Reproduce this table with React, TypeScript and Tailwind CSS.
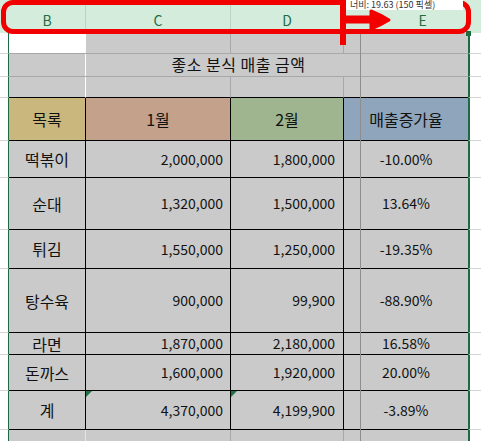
import React from "react";

const FONT = { fontFamily: '"Noto Sans CJK KR", "Noto Sans", sans-serif' };

function SideL({ h }: { h: number }) {
  return (
    <div
      className="shrink-0 w-[9px] bg-white border-r border-[#1e6b41] border-b border-b-[#d4d4d4]"
      style={{ height: h }}
    />
  );
}
function SideR({ h }: { h: number }) {
  return (
    <div
      className="shrink-0 w-[13px] bg-white border-l-2 border-[#1e6b41] border-b border-b-[#d4d4d4]"
      style={{ height: h }}
    />
  );
}

function Row({ h, children }: { h: number; children: React.ReactNode }) {
  return (
    <div className="flex w-[481px]" style={{ height: h }}>
      <SideL h={h} />
      {children}
      <SideR h={h} />
    </div>
  );
}

type DataRow = {
  h: number;
  name: string;
  a: string;
  b: string;
  r: string;
  tri?: boolean;
};

const data: DataRow[] = [
  { h: 37, name: "떡볶이", a: "2,000,000", b: "1,800,000", r: "-10.00%" },
  { h: 52, name: "순대", a: "1,320,000", b: "1,500,000", r: "13.64%" },
  { h: 39, name: "튀김", a: "1,550,000", b: "1,250,000", r: "-19.35%" },
  { h: 64, name: "탕수육", a: "900,000", b: "99,900", r: "-88.90%" },
  { h: 22, name: "라면", a: "1,870,000", b: "2,180,000", r: "16.58%" },
  { h: 36, name: "돈까스", a: "1,600,000", b: "1,920,000", r: "20.00%" },
  { h: 39, name: "계", a: "4,370,000", b: "4,199,900", r: "-3.89%", tri: true },
];

function Tri() {
  return (
    <div className="absolute left-0 top-0 w-0 h-0 border-t-[6px] border-t-[#1e7145] border-r-[6px] border-r-transparent" />
  );
}

export default function App() {
  return (
    <div
      className="relative w-[481px] h-[441px] overflow-hidden bg-white text-[14px] text-[#111]"
      style={FONT}
    >
      {/* column header */}
      <div className="flex w-[481px] h-[33px] bg-[#d3ecdc] text-[14px] text-[#1f6e43]">
        <div className="w-[9px] shrink-0" />
        <div className="w-[77px] shrink-0 flex items-center justify-center border-r border-[#b9d6c4] pt-[6px]">
          <span className="leading-none">B</span>
        </div>
        <div className="w-[145px] shrink-0 flex items-center justify-center border-r border-[#b9d6c4] pt-[6px]">
          <span className="leading-none">C</span>
        </div>
        <div className="w-[113px] shrink-0 flex items-center justify-center border-r border-[#b9d6c4] pt-[6px]">
          <span className="leading-none">D</span>
        </div>
        <div className="flex-1 flex items-center justify-center pl-[20px] pt-[6px]">
          <span className="leading-none">E</span>
        </div>
      </div>

      {/* row 1 */}
      <Row h={21}>
        <div className="w-[77px] shrink-0 bg-white border-b border-[#a8a8a8]" />
        <div className="w-[145px] shrink-0 bg-[#cacaca] border-r border-b border-[#a8a8a8]" />
        <div className="w-[113px] shrink-0 bg-[#cacaca] border-r border-b border-[#a8a8a8]" />
        <div className="w-[124px] shrink-0 bg-[#cacaca] border-b border-[#a8a8a8]" />
      </Row>

      {/* row 2 - title */}
      <Row h={23}>
        <div className="relative w-[459px] shrink-0 bg-[#cacaca] border-b border-[#a8a8a8] flex items-center justify-center">
          <div className="absolute left-[76px] top-0 bottom-0 w-px bg-white" />
          <span className="relative -top-px text-[16px] tracking-[0.5px]">좋소 분식 매출 금액</span>
        </div>
      </Row>

      {/* row 3 */}
      <Row h={21}>
        <div className="w-[77px] shrink-0 bg-[#cacaca] border-r border-r-white border-b border-b-black" />
        <div className="w-[145px] shrink-0 bg-[#cacaca] border-r border-r-[#a8a8a8] border-b border-b-black" />
        <div className="w-[113px] shrink-0 bg-[#cacaca] border-r border-r-[#a8a8a8] border-b border-b-black" />
        <div className="w-[124px] shrink-0 bg-[#cacaca] border-b border-b-black" />
      </Row>

      {/* table header */}
      <Row h={43}>
        <div className="w-[77px] shrink-0 bg-[#cab77d] border-r border-b border-black flex items-center justify-center text-[16px]">
          목록
        </div>
        <div className="w-[145px] shrink-0 bg-[#c4a18b] border-r border-b border-black flex items-center justify-center text-[16px]">
          1월
        </div>
        <div className="w-[113px] shrink-0 bg-[#9eb58f] border-r border-b border-black flex items-center justify-center text-[16px]">
          2월
        </div>
        <div className="w-[124px] shrink-0 bg-[#8fa5bb] border-b border-black flex items-center justify-center text-[16px]">
          매출증가율
        </div>
      </Row>

      {data.map((d) => (
        <Row key={d.name} h={d.h}>
          <div className="w-[77px] shrink-0 bg-[#cacaca] border-r border-b border-black flex items-center justify-center text-[16px]">
            {d.name}
          </div>
          <div className="relative w-[145px] shrink-0 bg-[#cacaca] border-r border-b border-black flex items-center justify-end pr-[7px]">
            {d.tri && <Tri />}
            {d.a}
          </div>
          <div className="relative w-[113px] shrink-0 bg-[#cacaca] border-r border-b border-black flex items-center justify-end pr-[8px]">
            {d.tri && <Tri />}
            {d.b}
          </div>
          <div className="w-[124px] shrink-0 bg-[#cacaca] border-b border-black flex items-center justify-center">
            {d.r}
          </div>
        </Row>
      ))}

      {/* bottom partial row */}
      <Row h={14}>
        <div className="w-[77px] shrink-0 bg-[#cacaca] border-r border-r-[#e4e4e4]" />
        <div className="w-[145px] shrink-0 bg-[#cacaca] border-r border-r-[#a8a8a8]" />
        <div className="w-[113px] shrink-0 bg-[#cacaca] border-r border-r-[#a8a8a8]" />
        <div className="w-[124px] shrink-0 bg-[#cacaca]" />
      </Row>

      {/* column resize guide line */}
      <div className="absolute left-[360px] top-[33px] bottom-0 w-px bg-[#8e8e8e]" />

      {/* selection corner handle */}
      <div className="absolute left-[466px] top-[31px] w-[5px] h-[5px] bg-[#1e6b41]" />

      {/* red annotation ring */}
      <div className="absolute left-[1px] top-0 w-[470px] h-[34px] border-[5px] border-[#f20000] rounded-[12px]" />

      {/* width tooltip (top edge of the ring runs above it) */}
      <div className="absolute left-[346px] top-0 w-[117px] h-[10px] bg-white pl-[4px] text-[9px] leading-[10px] text-[#333] whitespace-nowrap">
        너비: 19.63 (150 픽셀)
      </div>

      {/* red arrow annotation */}
      <svg
        className="absolute left-0 top-0"
        width="481"
        height="60"
        viewBox="0 0 481 60"
      >
        <rect x="340" y="0" width="6" height="45" fill="#f20000" />
        <path d="M345 19.5 L380 19.5" stroke="#f20000" strokeWidth="8" strokeLinecap="round" />
        <path
          d="M371 11 Q381 15 389 20 Q381 25 371 29 Z"
          fill="#f20000"
          stroke="#f20000"
          strokeWidth="3"
          strokeLinejoin="round"
        />
      </svg>
    </div>
  );
}
